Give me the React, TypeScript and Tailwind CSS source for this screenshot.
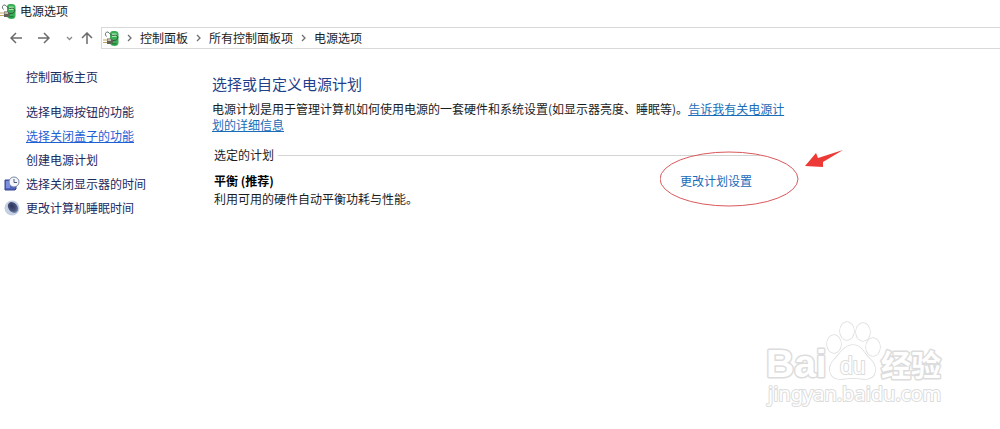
import React from "react";

const PowerIcon = () => (
    <svg width="16" height="17" viewBox="0 0 16 17" className="shrink-0" aria-hidden="true">
        <path d="M7 4c0-2 1-3 3-3h2c2 0 3.500 1 3.500 3v8.500c0 2.500-1.500 3.500-4 3.500S7 15 7 13z" fill="#3aae55" />
        <path d="M9 3.500h4.500V7H9z" fill="#a4ecae" />
        <path d="M9 13.800h4.500" stroke="#1b7a37" strokeWidth="1.200" />
        <path d="M3.500 6.500C1.500 4.500 2.500 2 4.500 2S7 5.500 10 5.500" fill="none" stroke="#55635c" />
        <path d="M10 5.500c4-1 5.500 1 4.500 3s-2.500 2-4.500 2" fill="none" stroke="#2c5538" />
        <path d="M4 8.500h4L10 10v2.500l-2 1.500H4z" fill="#64615a" />
        <path d="M4.500 9.300H8v1.500H4.500z" fill="#d8d5c6" />
        <path d="M0 10h4M0 12.500h4" stroke="#c0a564" />
    </svg>
);

const ClockIcon = () => (
    <svg width="16" height="16" viewBox="0 0 16 16" className="shrink-0" aria-hidden="true">
        <path d="M1 4h11v9l-1 1H1z" fill="#5063bf" stroke="#36448f" />
        <path d="M2 5h4v7H2z" fill="#7d8fe0" />
        <circle cx="10" cy="6" r="5" fill="#f3f6fb" stroke="#7c87a3" />
        <path d="M10 3v3.500h3" fill="none" stroke="#4b5673" />
    </svg>
);

const MoonIcon = () => (
    <svg width="16" height="16" viewBox="0 0 16 16" className="shrink-0" aria-hidden="true">
        <defs>
            <radialGradient id="moon" cx="0.500" cy="0.350" r="0.700">
                <stop offset="0" stopColor="#2b3357" />
                <stop offset="0.600" stopColor="#48537e" />
                <stop offset="1" stopColor="#8c9abb" />
            </radialGradient>
        </defs>
        <circle cx="8" cy="8" r="7.500" fill="#c3d0e2" />
        <ellipse cx="9" cy="7.500" rx="4.500" ry="6" transform="rotate(-40 9 7.500)" fill="url(#moon)" />
    </svg>
);

const Arrow = ({ d, label }: { d: string; label: string }) => (
    <button type="button" aria-label={label} className="shrink-0">
        <svg width="12" height="12" viewBox="0 0 12 12" fill="none" stroke="#6b6b6b" strokeWidth="1.500">
            <path d={d} />
        </svg>
    </button>
);

const Chevron = () => (
    <svg width="5" height="8" viewBox="0 0 5 8" fill="none" stroke="#6f6f6f" strokeWidth="1.300" className="shrink-0" aria-hidden="true">
        <path d="M1 1l3 3-3 3" />
    </svg>
);

const tasks = [
    { text: "选择电源按钮的功能" },
    { text: "选择关闭盖子的功能", active: true },
    { text: "创建电源计划" },
    { text: "选择关闭显示器的时间", icon: <ClockIcon /> },
    { text: "更改计算机睡眠时间", icon: <MoonIcon /> },
];

const crumbs = ["控制面板", "所有控制面板项", "电源选项"];

const Watermark = () => (
    <svg
        width="190"
        height="96"
        viewBox="0 0 190 96"
        className="absolute right-[50px] top-[316px]"
        fill="#ffffff"
        stroke="#dcdcdc"
        strokeWidth="3"
        strokeLinejoin="round"
        paintOrder="stroke"
        fontFamily="'Liberation Sans', 'Noto Sans CJK SC', sans-serif"
        fontWeight="700"
    >
        <text x="6" y="61" fontSize="39">Bai</text>
        <g strokeWidth="1.500">
            <ellipse cx="74" cy="28" rx="7" ry="9" />
            <ellipse cx="87" cy="15" rx="7" ry="9" />
            <ellipse cx="103" cy="16" rx="7" ry="9" />
            <ellipse cx="113" cy="31" rx="7" ry="9" />
            <path d="M93 29c9 0 11 9 17 14 7 6 8 19-4 20-5 0-8-1-13-1s-8 1-13 1c-11 0-13-12-6-19 6-6 10-15 19-15z" />
        </g>
        <text x="80" y="58" fontSize="23" fontWeight="400" strokeWidth="2">du</text>
        <text x="121" y="60" fontSize="30">经验</text>
        <text x="8" y="85" fontSize="20" fontWeight="400" strokeWidth="2" fontFamily="'Noto Sans', sans-serif">
            jingyan.baidu.com
        </text>
    </svg>
);

const App = () => {
    return (
        <div className="relative min-h-screen overflow-hidden bg-white text-[12px] leading-4 text-[#1c1c1c] font-['Noto_Sans_CJK_SC','Noto_Sans',sans-serif]">
            <header>
                <div className="flex h-[22px] items-center gap-1">
                    <PowerIcon />
                    <span>电源选项</span>
                </div>
                <div className="flex h-8 items-center">
                    <div className="flex w-[101px] shrink-0 items-center gap-4 pl-[10px]">
                        <Arrow label="后退" d="M12 6H1M6 1L1 6l5 5" />
                        <Arrow label="前进" d="M0 6h11M6 1l5 5-5 5" />
                        <div className="flex items-center gap-2">
                            <button type="button" aria-label="最近浏览的位置">
                                <svg width="7" height="5" viewBox="0 0 7 5" fill="none" stroke="#8a8a8a" strokeWidth="1.300">
                                    <path d="M1 1l2.500 2.500L6 1" />
                                </svg>
                            </button>
                            <Arrow label="向上" d="M6 12V1M1 6l5-5 5 5" />
                        </div>
                    </div>
                    <nav className="flex h-[22px] flex-1 items-center border-y border-l border-[#d9d9d9] pl-px">
                        <PowerIcon />
                        {crumbs.map((crumb) => (
                            <React.Fragment key={crumb}>
                                <span className="flex w-[21px] justify-center">
                                    <Chevron />
                                </span>
                                <a href="#">{crumb}</a>
                            </React.Fragment>
                        ))}
                    </nav>
                </div>
            </header>

            <div className="flex pt-3">
                <aside className="w-[212px] shrink-0 text-[#1d2a5e]">
                    <a href="#" className="ml-[26px] block h-6 pt-[3px]">控制面板主页</a>
                    <ul className="mt-[10px]">
                        {tasks.map((task) => (
                            <li key={task.text} className="flex h-6 items-center pl-1">
                                <span className="w-[22px]">{task.icon}</span>
                                <a href="#" className={task.active ? "text-[#1f5fd6] underline" : ""}>
                                    {task.text}
                                </a>
                            </li>
                        ))}
                    </ul>
                </aside>

                <main className="max-w-[576px] flex-1 pt-[6px]">
                    <h1 className="text-[15px] leading-6 text-[#1f3f8a]">选择或自定义电源计划</h1>
                    <p className="mt-[5px]">
                        电源计划是用于管理计算机如何使用电源的一套硬件和系统设置(如显示器亮度、睡眠等)。
                        <a href="#" className="text-[#1a6bb8] underline">告诉我有关电源计划的详细信息</a>
                    </p>
                    <section className="mt-[14px] pl-[2px]">
                        <div className="flex items-center gap-1">
                            <h2>选定的计划</h2>
                            <div className="mr-7 h-px flex-1 bg-[#d4d4d4]" />
                        </div>
                        <div className="mt-[9px] flex items-start justify-between pr-9">
                            <div className="leading-[18px]">
                                <h3 className="font-bold text-black">平衡 (推荐)</h3>
                                <p>利用可用的硬件自动平衡功耗与性能。</p>
                            </div>
                            <div className="relative leading-[18px]">
                                <a href="#" className="text-[#1a6bb8]">更改计划设置</a>
                                <svg
                                    width="190"
                                    height="62"
                                    viewBox="0 0 190 62"
                                    className="pointer-events-none absolute -left-5 -top-6"
                                    aria-hidden="true"
                                >
                                    <ellipse cx="69" cy="31" rx="69" ry="27" fill="none" stroke="#d9595c" />
                                    <path d="M145 18l11-13 2 5L183 2l-20 12v5z" fill="#ee3a36" />
                                </svg>
                            </div>
                        </div>
                    </section>
                </main>
            </div>

            <Watermark />
        </div>
    );
};

export default App;
